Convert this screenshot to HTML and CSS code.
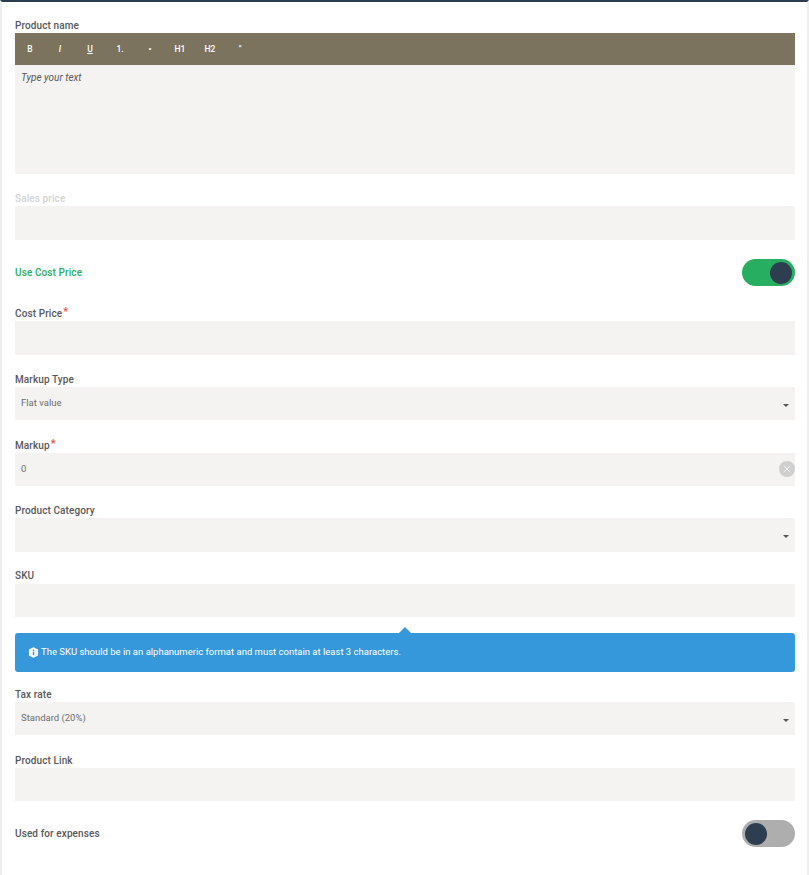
FILE: index.html
```html
<!DOCTYPE html>
<html lang="en">
<head>
<meta charset="utf-8">
<title>Product form</title>
<link rel="stylesheet" href="styles.css">
</head>
<body>
<div class="panel">
  <form class="form">
    <div class="field field-editor">
      <label class="label">Product name</label>
      <div class="toolbar">
        <span class="tool tool-b">B</span>
        <span class="tool tool-i">I</span>
        <span class="tool tool-u">U</span>
        <span class="tool">1.</span>
        <span class="tool">•</span>
        <span class="tool">H1</span>
        <span class="tool">H2</span>
        <span class="tool">"</span>
      </div>
      <div class="editor">Type your text</div>
    </div>
    <div class="field">
      <label class="label label-disabled">Sales price</label>
      <div class="input"></div>
    </div>
    <div class="toggle-row toggle-row-cost">
      <span class="label label-green">Use Cost Price</span>
      <span class="switch switch-on"><span class="knob"></span></span>
    </div>
    <div class="field">
      <label class="label">Cost Price<sup class="req">*</sup></label>
      <div class="input"></div>
    </div>
    <div class="field">
      <label class="label">Markup Type</label>
      <div class="input">Flat value<span class="caret"></span></div>
    </div>
    <div class="field">
      <label class="label">Markup<sup class="req">*</sup></label>
      <div class="input">0
        <svg class="clear" viewBox="0 0 16 16" width="16" height="16" aria-hidden="true"><circle cx="8" cy="8" r="8" fill="#cfcfcf"/><path d="M4.8 4.8l6.4 6.4M11.2 4.8l-6.4 6.4" stroke="#f4f3f2" stroke-width="1" fill="none"/></svg>
      </div>
    </div>
    <div class="field">
      <label class="label">Product Category</label>
      <div class="input"><span class="caret"></span></div>
    </div>
    <div class="field field-sku">
      <label class="label label-sku">SKU</label>
      <div class="input"></div>
    </div>
    <div class="alert"><svg class="alert-icon" viewBox="0 0 12 12" width="11" height="11" aria-hidden="true"><path d="M6 0.3l5 2.4v6.6l-5 2.4-5-2.4V2.7z" fill="#fff"/><rect x="5.2" y="5" width="1.6" height="4" fill="#3498db"/><rect x="5.2" y="2.8" width="1.6" height="1.5" fill="#3498db"/></svg><span class="alert-text">The SKU should be in an alphanumeric format and must contain at least 3 characters.</span></div>
    <div class="field">
      <label class="label">Tax rate</label>
      <div class="input">Standard (20%)<span class="caret"></span></div>
    </div>
    <div class="field">
      <label class="label">Product Link</label>
      <div class="input"></div>
    </div>
    <div class="toggle-row toggle-row-last">
      <span class="label label-expenses">Used for expenses</span>
      <span class="switch"><span class="knob"></span></span>
    </div>
  </form>
</div>
</body>
</html>
```
FILE: styles.css
```css
* { box-sizing: border-box; }
html, body { margin: 0; height: 100%; }
body {
  background: #fff;
  font-family: Roboto, "Liberation Sans", sans-serif;
  overflow: hidden;
}
.panel {
  height: 875px;
  border-top: 2px solid #2c3e50;
  border-left: 2px solid #eeeeee;
  border-right: 2px solid #eeeeee;
  padding: 18px 12px 0 13px;
}
.form { display: flex; flex-direction: column; }
.field { display: flex; flex-direction: column; margin-bottom: 20.2px; }
.label {
  display: block;
  font-size: 10px;
  line-height: 12px;
  font-weight: 500;
  letter-spacing: 0.1px;
  color: #58585a;
}
.field > .label { height: 12px; margin-top: -1px; margin-bottom: 1px; }
.field-editor > .label { margin-top: 0; margin-bottom: 0; }
.field > .label-sku { margin-top: -2px; margin-bottom: 2px; }
.label-disabled { color: #d3d3d3; }
.label-green { color: #27ae60; padding-top: 1px; }
.label-expenses { padding-top: 2px; }
.req { color: #e74c3c; font-size: 11px; line-height: 0; vertical-align: 2px; margin-left: 1px; }
.toolbar {
  height: 32px;
  margin-top: 1px;
  background: #7b735e;
  display: flex;
  align-items: center;
}
.tool {
  width: 30px;
  text-align: center;
  color: #fff;
  font-size: 8.5px;
  font-weight: 500;
  line-height: 28px;
}
.tool-i { font-style: italic; }
.tool-u { text-decoration: underline; }
.editor {
  height: 109px;
  background: #f4f3f2;
  padding: 7px 6px;
  font-size: 10px;
  line-height: 12px;
  font-style: italic;
  color: #58585a;
}
.input {
  position: relative;
  height: 33.5px;
  background: #f4f3f2;
  padding: 10px 6px;
  font-size: 9.5px;
  line-height: 12px;
  color: #6e6e6e;
}
.caret {
  position: absolute;
  right: 6px;
  top: 17px;
  width: 0;
  height: 0;
  border-left: 3px solid transparent;
  border-right: 3px solid transparent;
  border-top: 3px solid #555;
}
.clear { position: absolute; right: 0; top: 8px; }
.toggle-row {
  display: flex;
  align-items: center;
  justify-content: space-between;
  height: 27px;
}
.toggle-row-cost { margin-top: -0.9px; margin-bottom: 23.15px; }
.toggle-row-last { margin-top: -1.4px; }
.switch {
  display: flex;
  width: 53px;
  height: 27px;
  border-radius: 14px;
  background: #aeaeae;
  padding: 3px;
}
.switch-on { background: #27ae60; justify-content: flex-end; }
.knob {
  width: 22px;
  height: 22px;
  border-radius: 50%;
  background: #2c3e50;
}
.field-sku { margin-bottom: 15.6px; }
.alert {
  position: relative;
  height: 39px;
  margin-bottom: 17.9px;
  background: #3498db;
  border-radius: 3px;
  padding: 0 13px;
  color: #fff;
  font-size: 9.5px;
  line-height: 13px;
  display: flex;
  align-items: center;
  gap: 2px;
}
.alert-text { margin-top: -1px; }
.alert::before {
  content: "";
  position: absolute;
  top: -6px;
  left: 384px;
  border-left: 6px solid transparent;
  border-right: 6px solid transparent;
  border-bottom: 6px solid #3498db;
}
```
